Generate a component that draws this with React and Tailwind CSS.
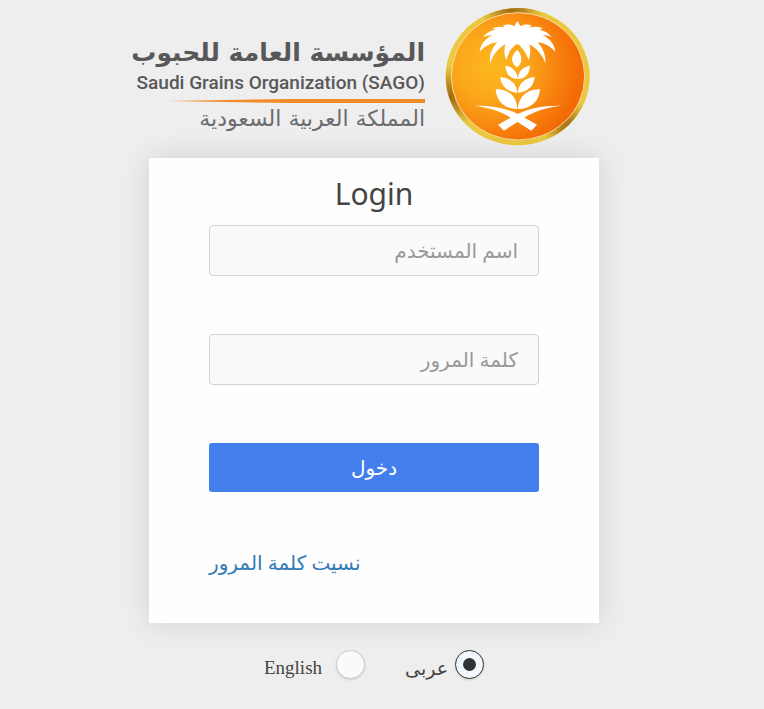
import React, { useState } from 'react'

function Emblem() {
  return (
    <svg viewBox="15 21 435 417" className="w-[145px] h-[139px] shrink-0" role="img" aria-label="SAGO">
      <defs>
        <radialGradient id="face" cx="0.3" cy="0.42" r="0.68">
          <stop offset="0" stopColor="#fdb91e" />
          <stop offset="0.4" stopColor="#fba61a" />
          <stop offset="0.8" stopColor="#f77c0c" />
          <stop offset="1" stopColor="#f36a06" />
        </radialGradient>
        <radialGradient id="shade">
          <stop offset="0" stopColor="#a06c10" />
          <stop offset="0.4" stopColor="#a87618" stopOpacity="0.75" />
          <stop offset="1" stopColor="#b98a20" stopOpacity="0" />
        </radialGradient>
        <clipPath id="rim">
          <ellipse cx="233" cy="230" rx="216" ry="206" />
        </clipPath>
      </defs>
      <ellipse cx="233" cy="230" rx="216" ry="206" fill="#ecc83e" />
      <g clipPath="url(#rim)" fill="url(#shade)">
        <circle cx="215" cy="26" r="95" />
        <circle cx="32" cy="290" r="95" />
        <circle cx="385" cy="380" r="80" />
      </g>
      <ellipse cx="234" cy="229" rx="200" ry="191" fill="url(#face)" stroke="#fbd9a0" strokeWidth="3" />
      <g fill="#fff">
        <path d="M232 64C236 68 238 73 240 79C251 73 264 72 275 77L268 83C284 78 300 79 309 86L296 89C313 91 328 100 335 112C327 107 318 105 308 106C328 114 344 134 346 156C334 141 314 129 293 127C308 143 318 166 316 190C309 168 292 146 268 133C272 147 272 164 266 180C260 164 252 149 243 141C240 136 236 133 232 133C228 133 223 137 220 141C208 149 204 165 199 180C192 164 192 148 196 133C173 146 157 167 151 190C146 167 156 144 172 127C151 129 131 141 119 156C121 135 136 115 157 106C147 105 138 107 130 112C137 99 151 91 169 89L157 86C167 79 181 78 196 83L188 77C200 72 213 73 224 79C226 73 228 68 232 64Z" />
        <path d="M232 149C242 160 247 174 243 185C240 194 236 199 231 202C225 198 219 192 217 183C214 171 222 159 232 149Z" />
        <path d="M196 197C216 200 231 213 233 237C212 237 197 222 196 197Z" />
        <path d="M270 197C250 200 235 213 233 237C254 237 269 222 270 197Z" />
        <path d="M181 231C209 234 229 248 232 278C203 276 183 259 181 231Z" />
        <path d="M284 231C256 234 236 248 233 278C262 276 282 259 284 231Z" />
        <path d="M167 267C203 268 230 286 232 327C195 327 169 305 167 267Z" />
        <path d="M300 267C264 268 236 286 233 327C271 327 298 305 300 267Z" />
        <path d="M103 317C157 316 200 325 238 344L291 374L274 392L215 355C184 333 147 323 103 317Z" />
        <path d="M363 317C309 316 266 325 228 344L174 374L192 392L250 355C281 333 319 323 363 317Z" />
      </g>
    </svg>
  )
}

function Logo() {
  return (
    <header className="flex items-start gap-5 w-[490px] pt-[7px]">
      <div className="flex flex-col items-end w-[296px] pt-7 whitespace-nowrap text-[#58585a]">
        <p lang="ar" dir="rtl" className="font-['DejaVu_Sans'] font-bold text-[25px] leading-9">
          المؤسسة العامة للحبوب
        </p>
        <p className="font-['Roboto'] font-medium text-[19px] leading-6">
          Saudi Grains Organization (SAGO)
        </p>
        <svg viewBox="0 0 256 4" className="w-64 h-1 my-1" aria-hidden="true">
          <path d="M0 2L120 0H256V4H120Z" fill="#f28c28" />
        </svg>
        <p lang="ar" dir="rtl" className="font-['DejaVu_Sans'] text-[22px] leading-6 text-[#6c6c6e]">
          المملكة العربية السعودية
        </p>
      </div>
      <Emblem />
    </header>
  )
}

function Field({ id, type, label }) {
  return (
    <input
      id={id}
      type={type}
      dir="rtl"
      aria-label={label}
      placeholder={label}
      className="block w-full h-[51px] mb-[58px] px-5 rounded border border-[#d2d2d2] bg-[#fafafa] text-[20px] text-[#444] placeholder:text-[#999] outline-none"
    />
  )
}

function LanguageOption({ id, label, lang, checked, onChange, className }) {
  return (
    <div className="flex items-start">
      <label htmlFor={id} lang={lang} className={className}>{label}</label>
      <input
        id={id}
        type="radio"
        name="language"
        checked={checked}
        onChange={onChange}
        className="appearance-none size-[29px] rounded-full border border-[#ccc] bg-[#fafafa] shadow-sm grid place-content-center checked:border-[#333] checked:bg-[#f3f7fe] checked:before:block checked:before:size-[13px] checked:before:rounded-full checked:before:bg-[#333]"
      />
    </div>
  )
}

export default function App() {
  const [language, setLanguage] = useState('ar')

  return (
    <div className="min-h-screen bg-[#eee] pr-4 flex flex-col items-center font-['Noto_Sans','DejaVu_Sans',sans-serif] text-[#444]">
      <Logo />

      <main className="w-full max-w-[450px] mt-3 px-[60px] pt-[15px] pb-10 bg-[#fefefe] shadow-[0_0_28px_rgba(0,0,0,0.12)]">
        <h1 className="mb-[10px] text-center text-[30px] leading-[42px]">Login</h1>
        <form onSubmit={e => e.preventDefault()}>
          <Field id="username" type="text" label="اسم المستخدم" />
          <Field id="password" type="password" label="كلمة المرور" />
          <button
            type="submit"
            lang="ar"
            className="block w-full h-[49px] rounded-[3px] bg-[#427fed] text-white text-[20px]"
          >
            دخول
          </button>
        </form>
        <a href="#forgot" lang="ar" dir="rtl" className="block w-fit mt-[51px] text-[20px] leading-10 text-[#337ab7]">
          نسيت كلمة المرور
        </a>
      </main>

      <div role="radiogroup" aria-label="Language" className="flex gap-10 mt-[27px]">
        <LanguageOption
          id="lang-en"
          label="English"
          lang="en"
          checked={language === 'en'}
          onChange={() => setLanguage('en')}
          className="pr-[14px] pt-1 font-['Liberation_Serif',serif] text-[19px] leading-7"
        />
        <LanguageOption
          id="lang-ar"
          label="عربى"
          lang="ar"
          checked={language === 'ar'}
          onChange={() => setLanguage('ar')}
          className="pr-[7px] pt-1 text-[19px] leading-7"
        />
      </div>
    </div>
  )
}
